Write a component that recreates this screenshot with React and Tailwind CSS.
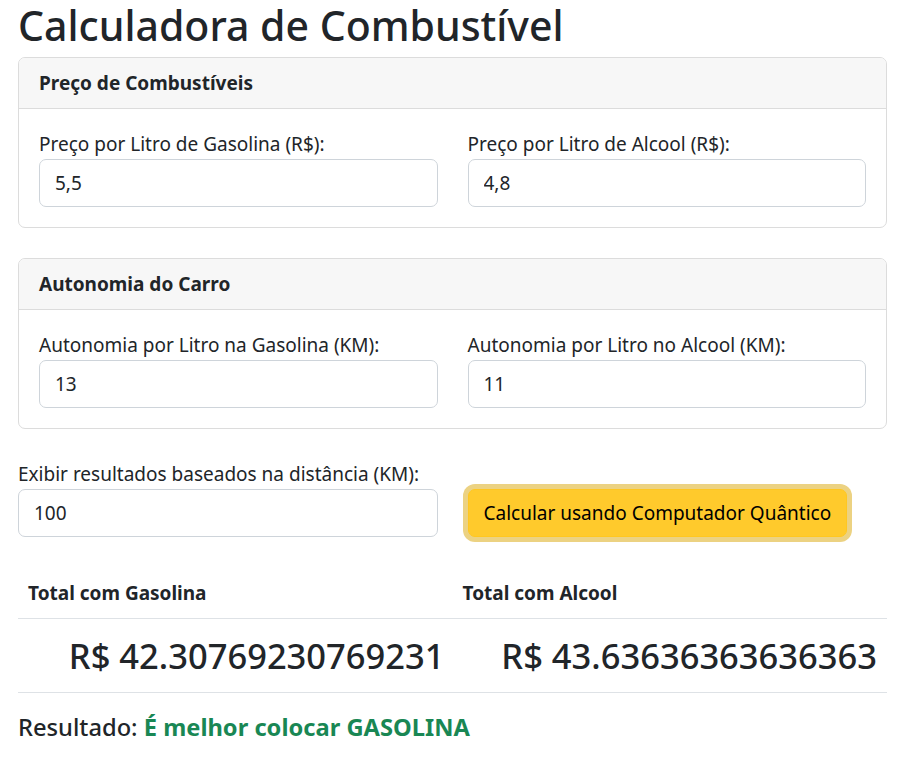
import { useState } from 'react';

function Campo({ label, value, onChange }) {
  return (
    <div>
      <label className="block">{label}</label>
      <input
        type="text"
        value={value}
        onChange={(e) => onChange(e.target.value)}
        className="block w-full h-[48px] px-[15px] border border-[#ced4da] rounded-[7px] bg-white text-[19px] text-[#212529] outline-none"
      />
    </div>
  );
}

function Cartao({ titulo, children }) {
  return (
    <div className="border border-[#dcdcdc] rounded-[7px] mb-[30px] overflow-hidden">
      <div className="bg-[#f7f7f7] border-b border-[#dcdcdc] px-5 py-[10px] text-[19px] leading-[30px] font-bold">
        {titulo}
      </div>
      <div className="p-5 grid grid-cols-2 gap-x-[30px]">{children}</div>
    </div>
  );
}

export default function App() {
  const [precoGas, setPrecoGas] = useState('5,5');
  const [precoAlc, setPrecoAlc] = useState('4,8');
  const [autoGas, setAutoGas] = useState('13');
  const [autoAlc, setAutoAlc] = useState('11');
  const [distancia, setDistancia] = useState('100');

  const num = (v) => parseFloat(String(v).replace(',', '.')) || 0;
  const totalGas = (num(precoGas) * num(distancia)) / num(autoGas);
  const totalAlc = (num(precoAlc) * num(distancia)) / num(autoAlc);
  const melhor = totalGas <= totalAlc ? 'GASOLINA' : 'ALCOOL';

  return (
    <div className="pt-px pl-[18px] pr-[21px] font-['Noto_Sans',sans-serif] text-[#212529] text-[19px] leading-[30px] bg-white min-h-screen">
      <h1 className="text-[41px] font-medium leading-[48px] mb-2">Calculadora de Combustível</h1>

      <Cartao titulo="Preço de Combustíveis">
        <Campo label="Preço por Litro de Gasolina (R$):" value={precoGas} onChange={setPrecoGas} />
        <Campo label="Preço por Litro de Alcool (R$):" value={precoAlc} onChange={setPrecoAlc} />
      </Cartao>

      <Cartao titulo="Autonomia do Carro">
        <Campo label="Autonomia por Litro na Gasolina (KM):" value={autoGas} onChange={setAutoGas} />
        <Campo label="Autonomia por Litro no Alcool (KM):" value={autoAlc} onChange={setAutoAlc} />
      </Cartao>

      <div className="grid grid-cols-2 gap-x-[30px] items-end">
        <Campo label="Exibir resultados baseados na distância (KM):" value={distancia} onChange={setDistancia} />
        <div>
          <button className="h-[48px] px-[15px] bg-[#ffca2c] border border-[#ffc720] rounded-[7px] text-black shadow-[0_0_0_5px_#ecd282]">
            Calcular usando Computador Quântico
          </button>
        </div>
      </div>

      <table className="w-full mt-[31px] mb-5 border-collapse">
        <thead>
          <tr className="border-b border-[#dee2e6]">
            <th className="w-1/2 p-[10px] text-left text-[19px] font-bold">Total com Gasolina</th>
            <th className="w-1/2 p-[10px] text-left text-[19px] font-bold">Total com Alcool</th>
          </tr>
        </thead>
        <tbody>
          <tr className="border-b border-[#dee2e6]">
            <td className="p-[10px] pr-2 text-right text-[34.5px] leading-[53px] font-medium">R$ {totalGas}</td>
            <td className="p-[10px] text-right text-[34.5px] leading-[53px] font-medium">R$ {totalAlc}</td>
          </tr>
        </tbody>
      </table>

      <p className="text-[23.7px] leading-[29px] font-medium">
        Resultado: <span className="text-[#198754] font-bold">É melhor colocar {melhor}</span>
      </p>
    </div>
  );
}
